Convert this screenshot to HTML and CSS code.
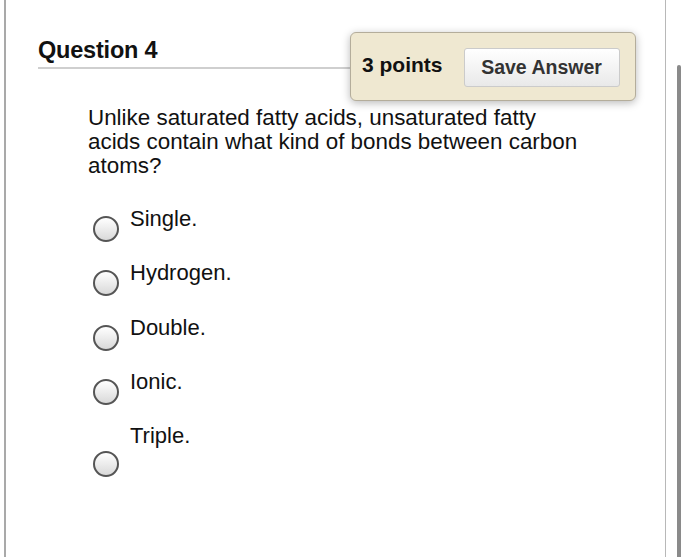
FILE: index.html
```html
<!DOCTYPE html>
<html>
<head>
<meta charset="utf-8">
<link rel="stylesheet" href="styles.css">
</head>
<body>
<div class="frame">
  <div class="panel">
    <div class="qhead">
      <h2 class="qtitle">Question 4</h2>
      <div class="points-box">
        <span class="points">3 points</span>
        <button class="save">Save Answer</button>
      </div>
    </div>
    <div class="qbody">
      <p class="prompt">Unlike saturated fatty acids, unsaturated fatty acids contain what kind of bonds between carbon atoms?</p>
      <ul class="options">
        <li class="option"><span class="radio"></span><span class="label">Single.</span></li>
        <li class="option"><span class="radio"></span><span class="label">Hydrogen.</span></li>
        <li class="option"><span class="radio"></span><span class="label">Double.</span></li>
        <li class="option"><span class="radio"></span><span class="label">Ionic.</span></li>
        <li class="option option-low"><span class="radio"></span><span class="label">Triple.</span></li>
      </ul>
    </div>
  </div>
  <div class="scrolltrack"><div class="thumb"></div></div>
</div>
</body>
</html>
```

FILE: styles.css
```css
html, body {
  margin: 0;
  padding: 0;
  background: #ffffff;
}
body {
  font-family: "Liberation Sans", Arial, Helvetica, sans-serif;
  color: #111;
  width: 685px;
  height: 557px;
  overflow: hidden;
}
.frame {
  display: flex;
  height: 557px;
  padding-left: 4px;
}
.panel {
  width: 662px;
  height: 557px;
  border-left: 2px solid #a9a9a9;
  border-right: 1px solid #b8b8b8;
  box-sizing: border-box;
  padding-left: 32px;
  padding-right: 28px;
  flex: none;
}
.qhead {
  position: relative;
  padding-top: 36px;
}
.qtitle {
  margin: 0;
  font-size: 23.5px;
  line-height: 28px;
  font-weight: bold;
  letter-spacing: -0.2px;
  padding-bottom: 3px;
  border-bottom: 2px solid #cfcfcf;
  width: 320px;
}
.points-box {
  position: absolute;
  left: 312px;
  top: 32px;
  width: 286px;
  height: 69px;
  box-sizing: border-box;
  background: #efe8d1;
  border: 1px solid #b4ad9b;
  border-radius: 6px;
  box-shadow: 0 2px 9px rgba(0, 0, 0, 0.28);
  display: flex;
  align-items: center;
  padding-left: 11px;
  gap: 21px;
}
.points {
  font-size: 21px;
  font-weight: bold;
  color: #111;
  margin-top: -3px;
}
.save {
  width: 156px;
  height: 39px;
  margin-top: 2px;
  font-family: "Liberation Sans", Arial, sans-serif;
  font-size: 19.5px;
  font-weight: bold;
  color: #333;
  background: linear-gradient(#ffffff, #e9e9e9);
  border: 1px solid #cbcbcb;
  border-radius: 3px;
  padding: 0;
}
.qbody {
  padding-left: 50px;
}
.prompt {
  margin: 37px 0 0;
  font-size: 22.4px;
  line-height: 24px;
  width: 497px;
}
.options {
  list-style: none;
  margin: 29px 0 0;
  padding: 0;
}
.option {
  display: flex;
  align-items: flex-start;
  height: 54.3px;
}
.radio {
  width: 26px;
  height: 26px;
  box-sizing: border-box;
  border: 2px solid #555;
  border-radius: 50%;
  background: linear-gradient(#ffffff, #d9d9d9);
  margin-top: 9px;
  margin-left: 5px;
  flex: none;
}
.option-low .radio {
  margin-top: 27px;
}
.label {
  font-size: 22px;
  line-height: 24px;
  margin-left: 11px;
}
.scrolltrack {
  flex: 1;
  padding-top: 65px;
  padding-left: 11px;
}
.thumb {
  width: 4px;
  height: 500px;
  background: #8a8a8a;
  border-radius: 2px;
}
```
